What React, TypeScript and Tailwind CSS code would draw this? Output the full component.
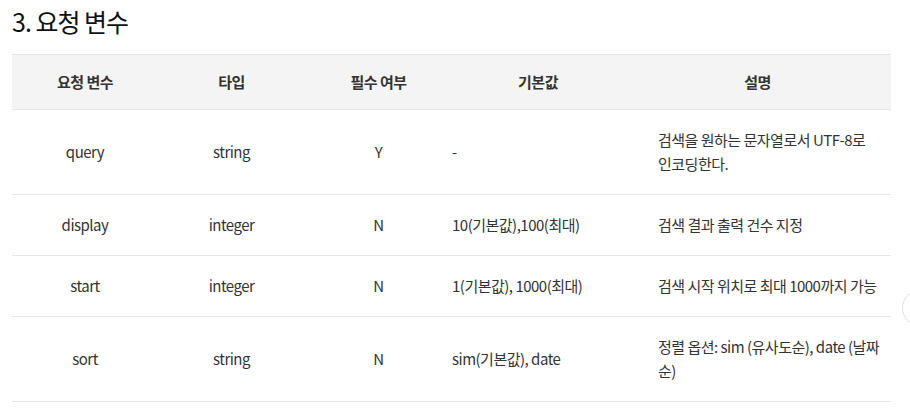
const ROWS = [
  { name: "query", type: "string", req: "Y", def: "-", desc: ["검색을 원하는 문자열로서 UTF-8로", "인코딩한다."] },
  { name: "display", type: "integer", req: "N", def: "10(기본값),100(최대)", desc: ["검색 결과 출력 건수 지정"] },
  { name: "start", type: "integer", req: "N", def: "1(기본값), 1000(최대)", desc: ["검색 시작 위치로 최대 1000까지 가능"] },
  { name: "sort", type: "string", req: "N", def: "sim(기본값), date", desc: ["정렬 옵션: sim (유사도순), date (날짜", "순)"] },
];

const App = () => {
  return (
    <div
      className="relative min-h-[415px] w-[910px] overflow-hidden bg-white pl-[12px] text-[#333]"
      style={{ fontFamily: '"Noto Sans CJK KR", "Noto Sans", sans-serif' }}
    >
      <h2 className="pt-[3px] text-[25px] leading-[36px] font-normal tracking-[-1px] text-[#111]">
        3. 요청 변수
      </h2>

      <table className="mt-[15px] w-[879px] table-fixed border-collapse text-[15px] leading-[24px] tracking-[-0.5px]">
        <colgroup>
          <col className="w-[146px]" />
          <col className="w-[147px]" />
          <col className="w-[147px]" />
          <col className="w-[206px]" />
          <col className="w-[233px]" />
        </colgroup>
        <thead>
          <tr className="border-y border-[#e6e6e6] bg-[#f4f4f4] font-bold text-[#333]">
            <th className="py-[15px] text-center">요청 변수</th>
            <th className="py-[15px] text-center">타입</th>
            <th className="py-[15px] text-center">필수 여부</th>
            <th className="py-[15px] pr-[34px] text-center">기본값</th>
            <th className="py-[15px] pr-[34px] text-center">설명</th>
          </tr>
        </thead>
        <tbody>
          {ROWS.map((r) => (
            <tr key={r.name} className="border-b border-[#e6e6e6]">
              <td className="py-[18px] text-center">{r.name}</td>
              <td className="py-[18px] text-center">{r.type}</td>
              <td className="py-[18px] text-center">{r.req}</td>
              <td className="py-[18px] text-left">{r.def}</td>
              <td className="py-[18px] text-left whitespace-nowrap">
                {r.desc.map((line, i) => (
                  <div key={i}>{line}</div>
                ))}
              </td>
            </tr>
          ))}
        </tbody>
      </table>

      {/* floating button peeking from the right edge */}
      <div className="absolute left-[902px] top-[290px] h-[36px] w-[36px] rounded-full border border-[#e2e2e2] bg-white" />
    </div>
  );
};

export default App;
